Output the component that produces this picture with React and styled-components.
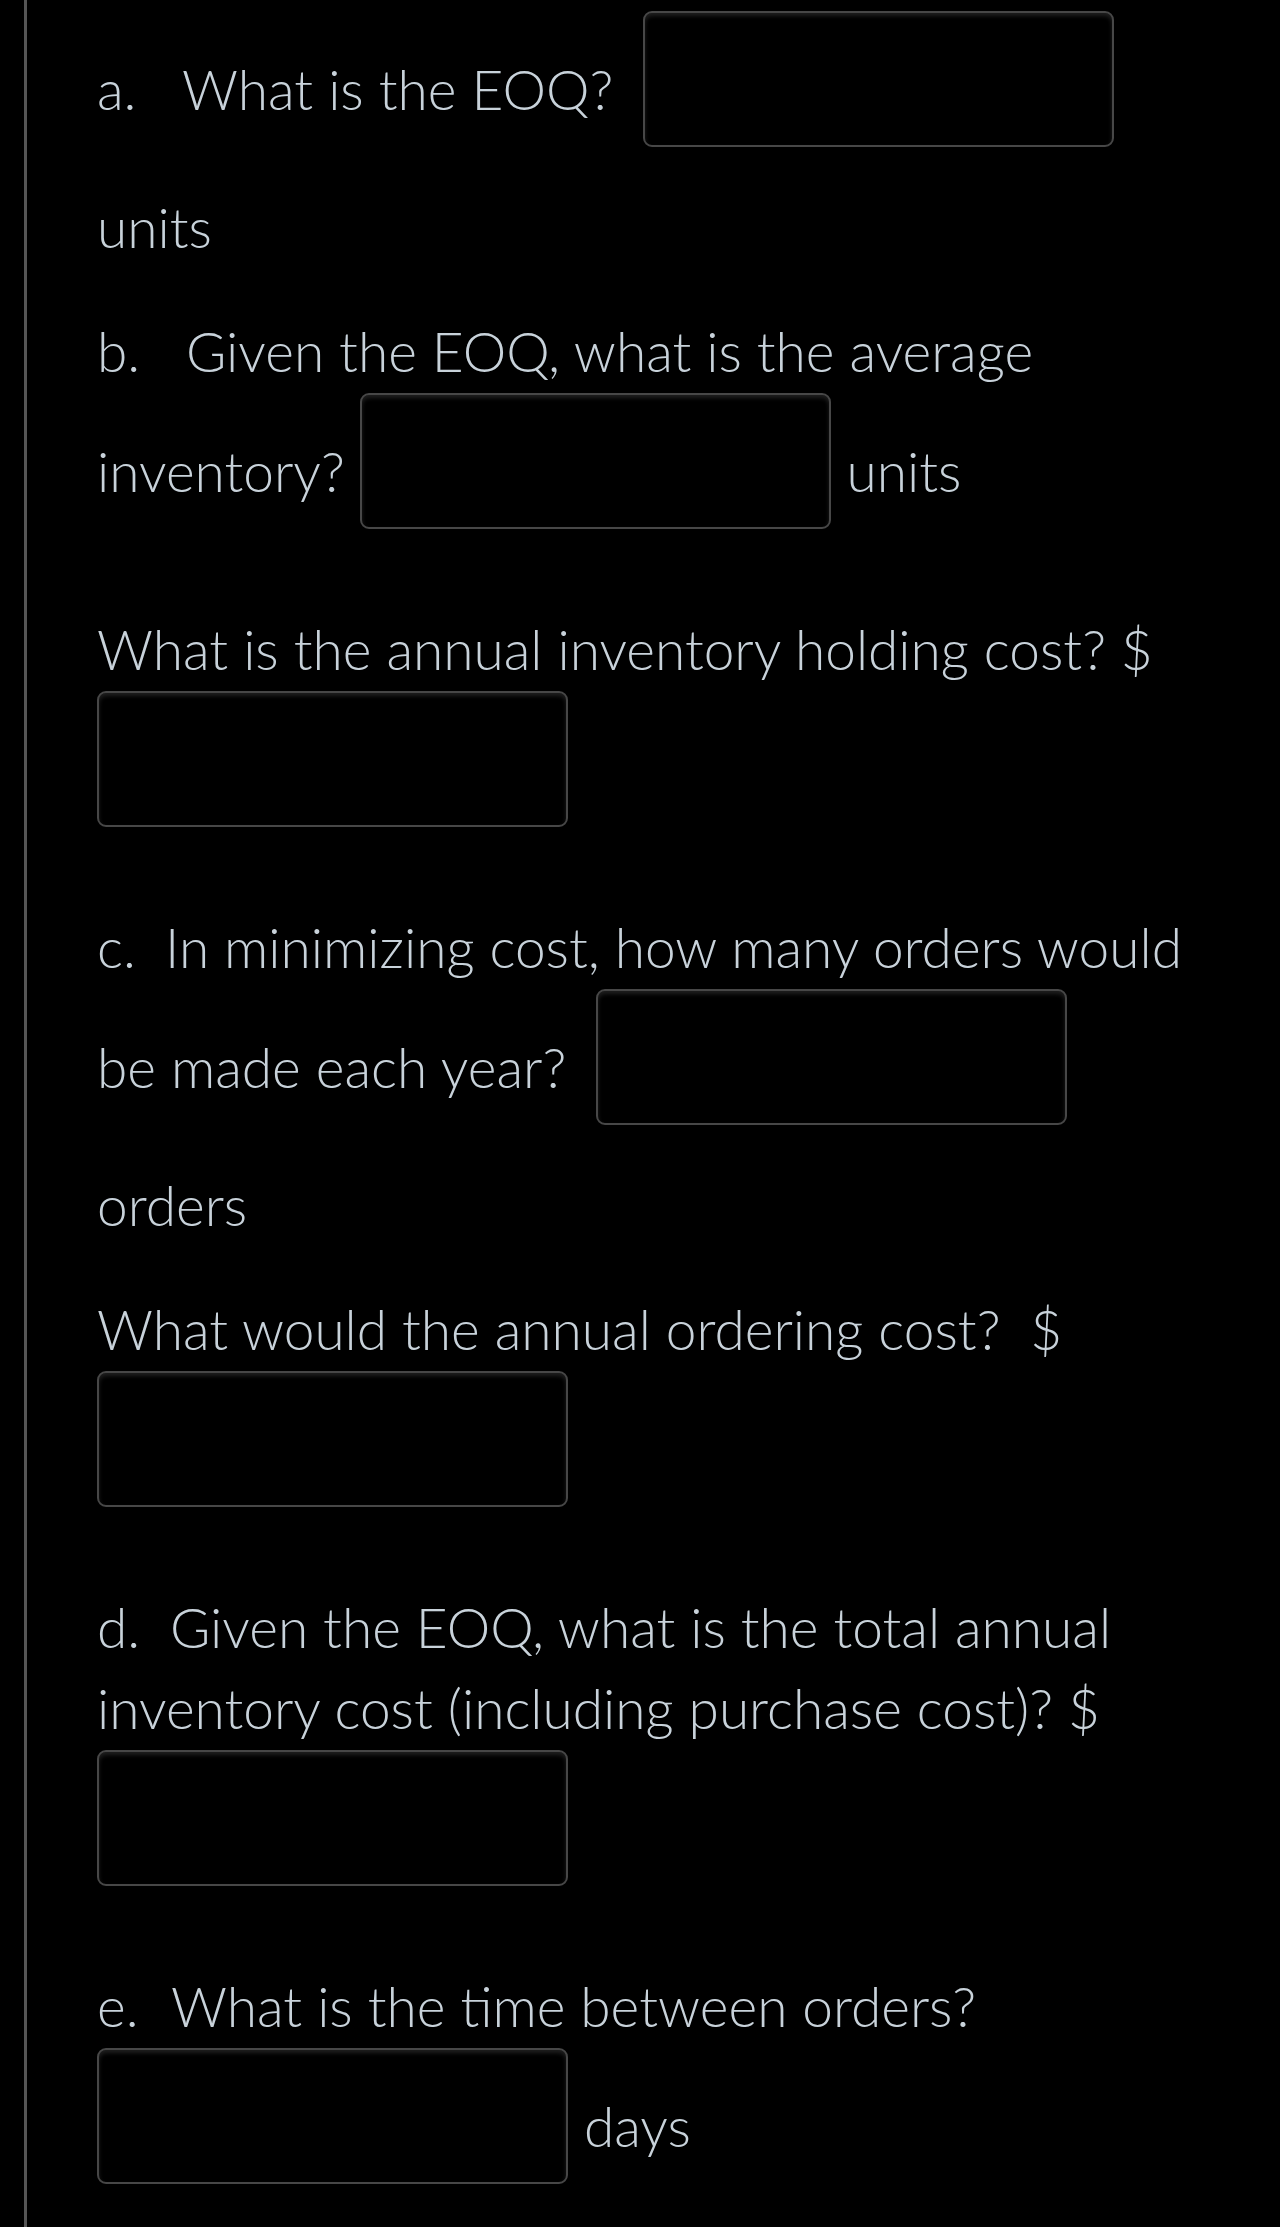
import React from "react";
import styled, { createGlobalStyle } from "styled-components";

const Global = createGlobalStyle`
    html, body {
        margin: 0;
        padding: 0;
        background: #000;
    }
`

const Page = styled.div`
    min-height: 2227px;
    box-sizing: border-box;
    padding-left: 24px;
    background: #000;
`

const Rail = styled.div`
    min-height: 2227px;
    box-sizing: border-box;
    width: 1186px;
    padding: 10px 0 0 70px;
    border-left: 3px solid #555;
`

const Para = styled.p`
    margin: ${p => p.$gap || 0}px 0 0;
    font-family: Lato, "Open Sans", sans-serif;
    font-weight: 300;
    font-size: 55px;
    line-height: 81px;
    color: #c8d2da;
`

const Marker = styled.span`
    display: inline-block;
    width: ${p => p.$w}px;
`

// empty answer field, sits on the text line like Canvas' inline inputs
const Blank = styled.span`
    display: inline-block;
    box-sizing: border-box;
    width: 471px;
    height: 136px;
    margin: 1px 1px 40px 0;
    vertical-align: -77px;
    border: 2px solid #474747;
    border-radius: 9px;
    background: #000;
    box-shadow: inset 0 3px 4px rgba(90, 90, 90, 0.35);
`

function App() {
    return (
        <Page>
            <Global />
            <Rail>
                <Para>
                    <Marker $w={85}>a.</Marker>What is the EOQ?&nbsp; <Blank /> units
                </Para>
                <Para $gap={43}>
                    <Marker $w={89}>b.</Marker>Given the EOQ, what is the average inventory? <Blank /> units
                </Para>
                <Para $gap={40}>
                    What is the annual inventory holding cost? $&nbsp; <Blank />
                </Para>
                <Para $gap={40}>
                    <Marker $w={68}>c.</Marker>In minimizing cost, how many orders would be made each year?&nbsp; <Blank /> orders
                </Para>
                <Para $gap={43}>
                    What would the annual ordering cost?&nbsp; $&nbsp; <Blank />
                </Para>
                <Para $gap={40}>
                    <Marker $w={73}>d.</Marker>Given the EOQ, what is the total annual inventory cost (including purchase cost)? $&nbsp; <Blank />
                </Para>
                <Para $gap={40}>
                    <Marker $w={74}>e.</Marker>What is the time between orders?&nbsp; <Blank /> days
                </Para>
            </Rail>
        </Page>
    )
}
export default App;
